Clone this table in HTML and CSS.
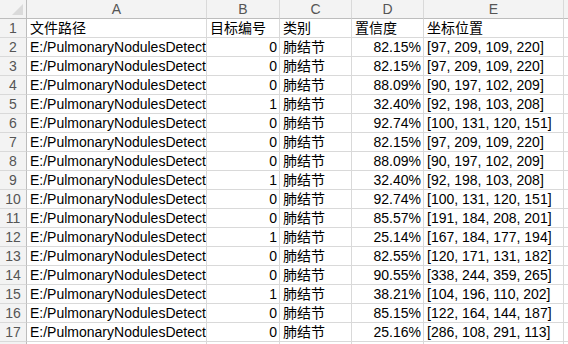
FILE: index.html
```html
<!DOCTYPE html>
<html lang="zh">
<head>
<meta charset="utf-8">
<title>Sheet</title>
<link rel="stylesheet" href="styles.css">
</head>
<body>
<div class="sheet">
  <div class="row head">
    <div class="c corner"><span class="tri"></span></div>
    <div class="c ch">A</div><div class="c ch">B</div><div class="c ch">C</div><div class="c ch">D</div><div class="c ch">E</div><div class="c ch last"></div>
  </div>
  <div class="row"><div class="c rh">1</div><div class="c">文件路径</div><div class="c">目标编号</div><div class="c">类别</div><div class="c">置信度</div><div class="c">坐标位置</div><div class="c last"></div></div>
  <div class="row"><div class="c rh">2</div><div class="c">E:/PulmonaryNodulesDetection</div><div class="c num">0</div><div class="c">肺结节</div><div class="c num">82.15%</div><div class="c">[97, 209, 109, 220]</div><div class="c last"></div></div>
  <div class="row"><div class="c rh">3</div><div class="c">E:/PulmonaryNodulesDetection</div><div class="c num">0</div><div class="c">肺结节</div><div class="c num">82.15%</div><div class="c">[97, 209, 109, 220]</div><div class="c last"></div></div>
  <div class="row"><div class="c rh">4</div><div class="c">E:/PulmonaryNodulesDetection</div><div class="c num">0</div><div class="c">肺结节</div><div class="c num">88.09%</div><div class="c">[90, 197, 102, 209]</div><div class="c last"></div></div>
  <div class="row"><div class="c rh">5</div><div class="c">E:/PulmonaryNodulesDetection</div><div class="c num">1</div><div class="c">肺结节</div><div class="c num">32.40%</div><div class="c">[92, 198, 103, 208]</div><div class="c last"></div></div>
  <div class="row"><div class="c rh">6</div><div class="c">E:/PulmonaryNodulesDetection</div><div class="c num">0</div><div class="c">肺结节</div><div class="c num">92.74%</div><div class="c">[100, 131, 120, 151]</div><div class="c last"></div></div>
  <div class="row"><div class="c rh">7</div><div class="c">E:/PulmonaryNodulesDetection</div><div class="c num">0</div><div class="c">肺结节</div><div class="c num">82.15%</div><div class="c">[97, 209, 109, 220]</div><div class="c last"></div></div>
  <div class="row"><div class="c rh">8</div><div class="c">E:/PulmonaryNodulesDetection</div><div class="c num">0</div><div class="c">肺结节</div><div class="c num">88.09%</div><div class="c">[90, 197, 102, 209]</div><div class="c last"></div></div>
  <div class="row"><div class="c rh">9</div><div class="c">E:/PulmonaryNodulesDetection</div><div class="c num">1</div><div class="c">肺结节</div><div class="c num">32.40%</div><div class="c">[92, 198, 103, 208]</div><div class="c last"></div></div>
  <div class="row"><div class="c rh">10</div><div class="c">E:/PulmonaryNodulesDetection</div><div class="c num">0</div><div class="c">肺结节</div><div class="c num">92.74%</div><div class="c">[100, 131, 120, 151]</div><div class="c last"></div></div>
  <div class="row"><div class="c rh">11</div><div class="c">E:/PulmonaryNodulesDetection</div><div class="c num">0</div><div class="c">肺结节</div><div class="c num">85.57%</div><div class="c">[191, 184, 208, 201]</div><div class="c last"></div></div>
  <div class="row"><div class="c rh">12</div><div class="c">E:/PulmonaryNodulesDetection</div><div class="c num">1</div><div class="c">肺结节</div><div class="c num">25.14%</div><div class="c">[167, 184, 177, 194]</div><div class="c last"></div></div>
  <div class="row"><div class="c rh">13</div><div class="c">E:/PulmonaryNodulesDetection</div><div class="c num">0</div><div class="c">肺结节</div><div class="c num">82.55%</div><div class="c">[120, 171, 131, 182]</div><div class="c last"></div></div>
  <div class="row"><div class="c rh">14</div><div class="c">E:/PulmonaryNodulesDetection</div><div class="c num">0</div><div class="c">肺结节</div><div class="c num">90.55%</div><div class="c">[338, 244, 359, 265]</div><div class="c last"></div></div>
  <div class="row"><div class="c rh">15</div><div class="c">E:/PulmonaryNodulesDetection</div><div class="c num">1</div><div class="c">肺结节</div><div class="c num">38.21%</div><div class="c">[104, 196, 110, 202]</div><div class="c last"></div></div>
  <div class="row"><div class="c rh">16</div><div class="c">E:/PulmonaryNodulesDetection</div><div class="c num">0</div><div class="c">肺结节</div><div class="c num">85.15%</div><div class="c">[122, 164, 144, 187]</div><div class="c last"></div></div>
  <div class="row"><div class="c rh">17</div><div class="c">E:/PulmonaryNodulesDetection</div><div class="c num">0</div><div class="c">肺结节</div><div class="c num">25.16%</div><div class="c">[286, 108, 291, 113]</div><div class="c last"></div></div>
  <div class="row"><div class="c rh">18</div><div class="c">E:/PulmonaryNodulesDetection</div><div class="c num">1</div><div class="c">肺结节</div><div class="c num">27.33%</div><div class="c">[140, 120, 150, 130]</div><div class="c last"></div></div>
</div>
</body>
</html>
```

FILE: styles.css
```css
html, body {
  margin: 0;
  padding: 0;
  background: #ffffff;
}

.sheet {
  width: 568px;
  height: 344px;
  overflow: hidden;
  display: flex;
  flex-direction: column;
  font-family: "Liberation Sans", "Noto Sans CJK SC", sans-serif;
  font-size: 14px;
  color: #000000;
}

.row {
  flex: none;
  display: grid;
  grid-template-columns: 27px 180px 73px 72px 72px 140px 1fr;
  height: 19px;
}

.c {
  box-sizing: border-box;
  height: 19px;
  border-right: 1px solid #d9d9d9;
  border-bottom: 1px solid #d9d9d9;
  overflow: hidden;
  white-space: nowrap;
  padding: 1px 2px 0 3px;
  line-height: 17px;
}

.num {
  text-align: right;
  padding-right: 2px;
}

.last {
  border-right: none;
}

.head .c {
  background: #f3f3f3;
  border-bottom: 1px solid #bdbdbd;
  border-right: 1px solid #d9d9d9;
  color: #555555;
  text-align: center;
  padding: 0;
  line-height: 18px;
}

.head .last {
  border-right: none;
}

.head .corner {
  position: relative;
  border-right: 1px solid #bdbdbd;
}

.tri {
  position: absolute;
  right: 3px;
  bottom: 3px;
  width: 0;
  height: 0;
  border-left: 11px solid transparent;
  border-bottom: 11px solid #dadada;
}

.rh {
  background: #f3f3f3;
  color: #555555;
  text-align: center;
  padding: 1px 0 0 0;
  border-right: 1px solid #bdbdbd;
}
```
